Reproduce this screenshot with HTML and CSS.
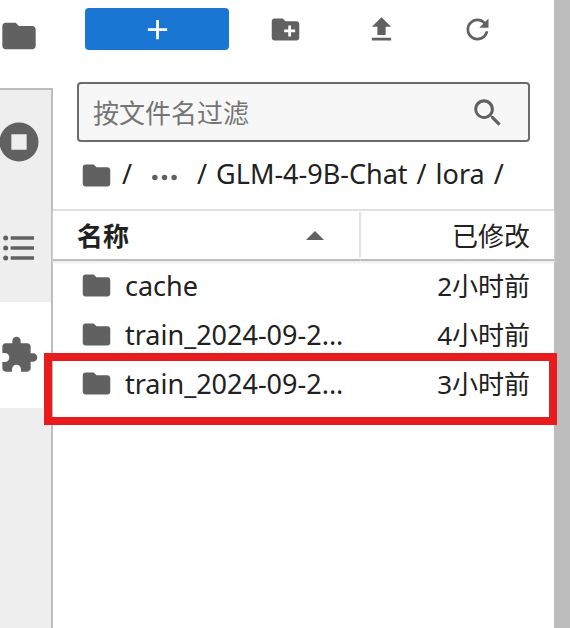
FILE: index.html
```html
<!DOCTYPE html>
<html lang="zh-CN">
<head>
	<meta charset="utf-8">
	<title>lora</title>
	<link rel="stylesheet" href="styles.css">
</head>
<body>
	<!-- shared shape, used by the sidebar, breadcrumbs and rows -->
	<svg class="defs" aria-hidden="true">
		<symbol id="folder" viewBox="0 0 24 24">
			<path d="M10 4H4c-1.1 0-1.99.9-1.99 2L2 18c0 1.1.9 2 2 2h16c1.1 0 2-.9 2-2V8c0-1.1-.9-2-2-2h-8l-2-2z"/>
		</symbol>
	</svg>

	<div class="app">
		<nav class="sidebar">
			<button class="tab tab-files" aria-label="文件"><svg><use href="#folder"/></svg></button>
			<div class="tabs">
				<button class="tab" aria-label="运行">
					<svg viewBox="0 0 24 24"><path fill-rule="evenodd" d="M12 .3a11.7 11.7 0 1 0 0 23.4A11.7 11.7 0 0 0 12 .3zM7.4 7.4h9.2v9.2H7.4z"/></svg>
				</button>
				<button class="tab" aria-label="目录">
					<svg viewBox="0 0 24 24"><path d="M7 5h14v2H7zM7 11h14v2H7zM7 17h14v2H7z"/><circle cx="4" cy="6" r="1.5"/><circle cx="4" cy="12" r="1.5"/><circle cx="4" cy="18" r="1.5"/></svg>
				</button>
				<button class="tab tab-active" aria-label="扩展">
					<svg viewBox="0 0 24 24"><path d="M20.5 11H19V7c0-1.1-.9-2-2-2h-4V3.5C13 2.12 11.88 1 10.5 1S8 2.12 8 3.5V5H4c-1.1 0-1.99.9-1.99 2v3.8H3.5c1.49 0 2.7 1.21 2.7 2.7s-1.21 2.7-2.7 2.7H2V20c0 1.1.9 2 2 2h3.8v-1.5c0-1.49 1.21-2.7 2.7-2.7s2.7 1.21 2.7 2.7V22H17c1.1 0 2-.9 2-2v-4h1.5c1.38 0 2.5-1.12 2.5-2.5S21.88 11 20.5 11z"/></svg>
				</button>
			</div>
		</nav>

		<main class="browser">
			<div class="toolbar">
				<button class="new" aria-label="新建">
					<svg viewBox="0 0 24 24"><path d="M19 13h-6v6h-2v-6H5v-2h6V5h2v6h6z"/></svg>
				</button>
				<button class="tool" aria-label="新建文件夹">
					<svg viewBox="0 0 24 24"><path d="M20 6h-8l-2-2H4c-1.11 0-1.99.89-1.99 2L2 18c0 1.11.89 2 2 2h16c1.11 0 2-.89 2-2V8c0-1.11-.89-2-2-2zm-1 8h-3v3h-2v-3h-3v-2h3V9h2v3h3v2z"/></svg>
				</button>
				<button class="tool" aria-label="上传">
					<svg viewBox="0 0 24 24"><path d="M9 16h6v-6h4l-7-7-7 7h4zM5 18h14v2H5z"/></svg>
				</button>
				<button class="tool" aria-label="刷新">
					<svg viewBox="0 0 18 18"><path d="M9 13.5c-2.49 0-4.5-2.01-4.5-4.5S6.51 4.5 9 4.5c1.24 0 2.36.52 3.17 1.33L10 8h5V3l-1.76 1.76C12.15 3.68 10.66 3 9 3 5.69 3 3.01 5.69 3.01 9S5.69 15 9 15c2.97 0 5.43-2.16 5.9-5h-1.52c-.46 2-2.24 3.5-4.38 3.5z"/></svg>
				</button>
			</div>

			<label class="filter">
				<input type="text" placeholder="按文件名过滤" aria-label="按文件名过滤">
				<svg viewBox="0 0 18 18"><path d="M12.1 10.9h-.7l-.2-.2c.8-.9 1.3-2.2 1.3-3.5 0-3-2.4-5.4-5.4-5.4S1.8 4.2 1.8 7.1s2.4 5.4 5.4 5.4c1.3 0 2.5-.5 3.5-1.3l.2.2v.7l4.1 4.1 1.2-1.2-4.1-4.1zm-5 0c-2.1 0-3.7-1.7-3.7-3.7s1.7-3.7 3.7-3.7 3.7 1.7 3.7 3.7-1.6 3.7-3.7 3.7z"/></svg>
			</label>

			<div class="crumbs">
				<a href="#" aria-label="根目录"><svg><use href="#folder"/></svg></a>
				<span class="crumb">/</span>
				<a class="more" href="#" aria-label="更多"><svg viewBox="0 0 24 24"><circle cx="5" cy="12" r="2"/><circle cx="12" cy="12" r="2"/><circle cx="19" cy="12" r="2"/></svg></a>
				<span class="crumb">/</span>
				<a class="crumb" href="#">GLM-4-9B-Chat</a>
				<span class="crumb">/</span>
				<a class="crumb" href="#">lora</a>
				<span class="crumb">/</span>
			</div>

			<table class="files">
				<thead>
					<tr>
						<th class="name"><div class="cell">名称<svg class="caret" viewBox="0 0 18 9"><path d="M0 9l9-9 9 9z"/></svg></div></th>
						<th class="date"><div class="cell">已修改</div></th>
					</tr>
				</thead>
				<tbody>
					<tr>
						<td><div class="cell"><svg><use href="#folder"/></svg>cache</div></td>
						<td class="date">2小时前</td>
					</tr>
					<tr>
						<td><div class="cell"><svg><use href="#folder"/></svg>train_2024-09-2...</div></td>
						<td class="date">4小时前</td>
					</tr>
					<tr class="marked">
						<td><div class="cell"><svg><use href="#folder"/></svg>train_2024-09-2...</div></td>
						<td class="date">3小时前</td>
					</tr>
				</tbody>
			</table>
		</main>
	</div>
</body>
</html>
```
FILE: styles.css
```css
* {
	box-sizing: border-box;
}

body {
	margin: 0;
	background: #fff;
	color: #212121;
	font: 26px/34px "Noto Sans", "Noto Sans CJK SC", sans-serif;
}

button {
	border: 0;
	padding: 0;
	background: none;
}

a {
	color: inherit;
	text-decoration: none;
}

svg {
	display: block;
	flex: none;
	width: 33px;
	height: 33px;
	fill: #616161;
}

.defs {
	display: none;
}

.app {
	display: flex;
	min-height: 100vh;
}

/* left tabs */
.sidebar {
	flex: none;
	width: 53px;
	display: flex;
	flex-direction: column;
}

.tabs {
	flex: 1;
	background: #eee;
	border-top: 2px solid #bdbdbd;
	border-right: 2px solid #bdbdbd;
}

.tab {
	display: flex;
	align-items: center;
	justify-content: center;
	width: 100%;
	height: 106px;
	padding: 0 13px 2px 0;
}

.tab svg {
	width: 40px;
	height: 40px;
}

.tab-files {
	height: 88px;
	padding: 0 15px 16px 0;
}

.tab-active {
	padding-bottom: 0;
	background: #fff;
}

/* file browser */
.browser {
	flex: 1;
	min-width: 0;
	border-right: 16px solid #bdbdbd;
}

.toolbar {
	display: flex;
	padding: 8px 28px 0 32px;
}

.toolbar button {
	display: flex;
	align-items: center;
	justify-content: center;
	height: 42px;
}

.new {
	flex: 3;
	margin-right: 8px;
	border-radius: 4px;
	background: #1976d2;
}

.new svg {
	fill: #fff;
}

.tool {
	flex: 2;
}

.filter {
	display: flex;
	align-items: center;
	height: 60px;
	margin: 32px 24px 0;
	padding: 0 24px 0 14px;
	border: 2px solid #6b6b6b;
	border-radius: 4px;
	background: #f7f7f7;
}

.filter input {
	flex: 1;
	min-width: 0;
	padding: 2px 0 0;
	border: 0;
	outline: 0;
	background: none;
	font: inherit;
}

.filter input::placeholder {
	color: #757575;
}

.crumbs {
	display: flex;
	align-items: center;
	gap: 9px;
	height: 67px;
	padding-left: 27px;
	font-size: 27px;
}

.crumb {
	padding-bottom: 4px;
}

.more {
	padding: 4px 7px 0;
}

/* listing */
.files {
	width: 100%;
	table-layout: fixed;
	border-collapse: separate;
	border-spacing: 0;
}

.files th,
.files td {
	height: 49px;
	padding: 0 0 0 27px;
	text-align: left;
	white-space: nowrap;
}

.files thead th {
	height: 52px;
	padding: 1px 0 2px;
	border-top: 2px solid #e0e0e0;
	border-bottom: 2px solid #bdbdbd;
	box-shadow: 0 2px 2px #eee;
}

.cell {
	display: flex;
	align-items: center;
	gap: 12px;
}

.files td .cell {
	font-size: 27px;
}

.files th .cell {
	height: 45px;
	padding-top: 2px;
}

.files .name .cell {
	justify-content: space-between;
	padding: 2px 35px 0 24px;
	border-right: 2px solid #e0e0e0;
}

.caret {
	width: 18px;
	height: 9px;
}

.files .date {
	width: 193px;
	padding-right: 24px;
	text-align: right;
	font-weight: normal;
}

.date .cell {
	justify-content: flex-end;
}

.marked {
	position: relative;
}

/* frame drawn round the highlighted row */
.marked td:first-child::after {
	content: "";
	position: absolute;
	top: -6px;
	right: -3px;
	bottom: -17px;
	left: -9px;
	border: 8px solid #e81c1c;
}
```
